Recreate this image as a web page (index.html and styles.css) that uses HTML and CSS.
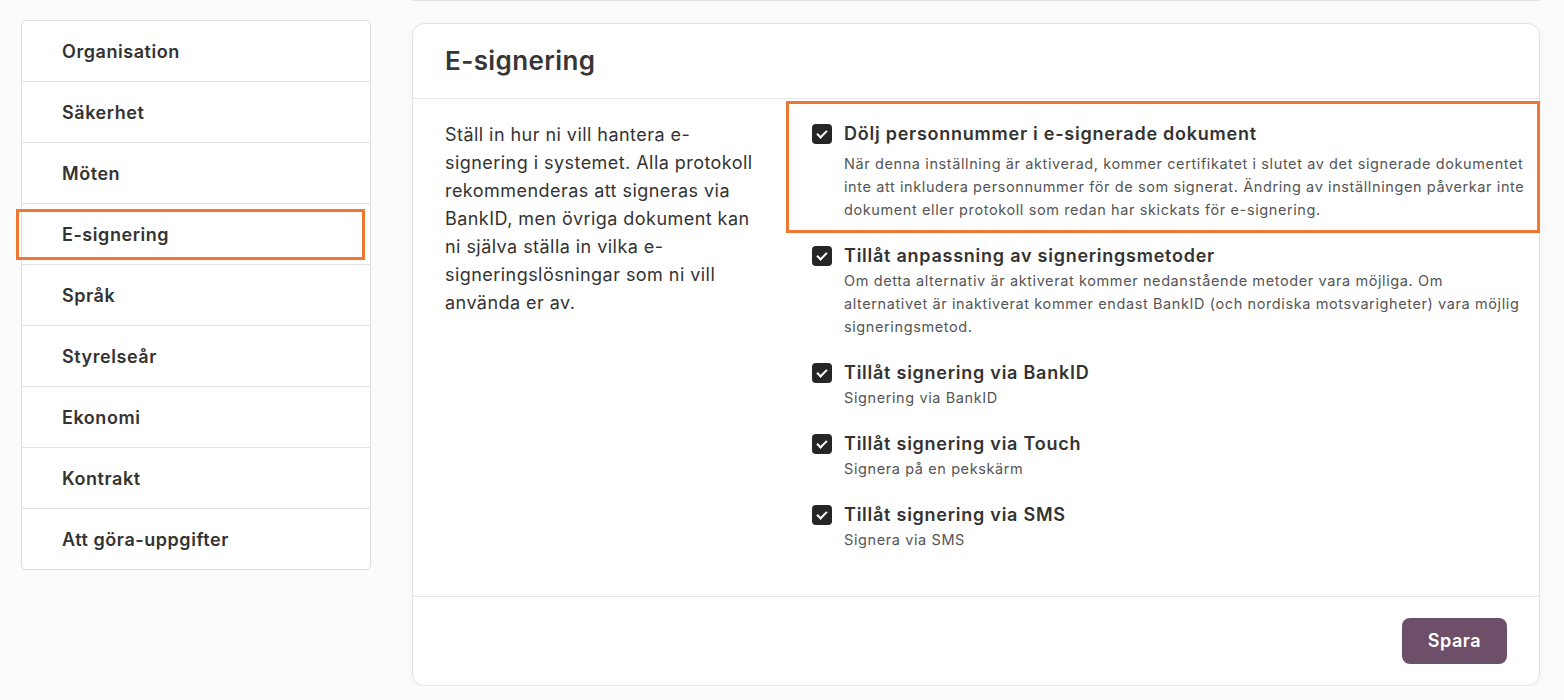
FILE: index.html
```html
<!DOCTYPE html>
<html lang="sv">
<head>
  <meta charset="utf-8" />
  <title>Inställningar – E-signering</title>
  <link rel="stylesheet" href="styles.css">
</head>
<body>
  <div class="page">

    <ul class="side-menu">
      <li>Organisation</li>
      <li>Säkerhet</li>
      <li>Möten</li>
      <li class="marked">E-signering</li>
      <li>Språk</li>
      <li>Styrelseår</li>
      <li>Ekonomi</li>
      <li>Kontrakt</li>
      <li>Att göra-uppgifter</li>
    </ul>

    <div class="content">
      <div class="prev-card"></div>

      <div class="card">
        <div class="card-header">E-signering</div>

        <div class="card-body">
          <p class="intro">Ställ in hur ni vill hantera e-signering i systemet. Alla protokoll rekommenderas att signeras via BankID, men övriga dokument kan ni själva ställa in vilka e-signeringslösningar som ni vill använda er av.</p>

          <div class="options">
            <div class="option marked first">
              <span class="check"></span>
              <div>
                <p class="option-title">Dölj personnummer i e-signerade dokument</p>
                <p class="option-desc">När denna inställning är aktiverad, kommer certifikatet i slutet av det signerade dokumentet inte att inkludera personnummer för de som signerat. Ändring av inställningen påverkar inte dokument eller protokoll som redan har skickats för e-signering.</p>
              </div>
            </div>

            <div class="option">
              <span class="check"></span>
              <div>
                <p class="option-title">Tillåt anpassning av signeringsmetoder</p>
                <p class="option-desc">Om detta alternativ är aktiverat kommer nedanstående metoder vara möjliga. Om alternativet är inaktiverat kommer endast BankID (och nordiska motsvarigheter) vara möjlig signeringsmetod.</p>
              </div>
            </div>

            <div class="option">
              <span class="check"></span>
              <div>
                <p class="option-title">Tillåt signering via BankID</p>
                <p class="option-desc">Signering via BankID</p>
              </div>
            </div>

            <div class="option">
              <span class="check"></span>
              <div>
                <p class="option-title">Tillåt signering via Touch</p>
                <p class="option-desc">Signera på en pekskärm</p>
              </div>
            </div>

            <div class="option">
              <span class="check"></span>
              <div>
                <p class="option-title">Tillåt signering via SMS</p>
                <p class="option-desc">Signera via SMS</p>
              </div>
            </div>
          </div>
        </div>

        <div class="card-footer">
          <a class="btn-save">Spara</a>
        </div>
      </div>
    </div>

  </div>
</body>
</html>
```

FILE: styles.css
```css
body {
  margin: 0;
  background: #FBFBFB;
  color: #333;
  font: normal 18px/28px Inter, "Noto Sans", sans-serif;
}

p {
  margin: 0;
}

.page {
  display: flex;
  align-items: flex-start;
  gap: 41px;
  padding: 0 24px 0 21px;
}

/* left menu */

.side-menu {
  width: 348px;
  margin: 20px 0 0;
  padding: 0;
  list-style: none;
  background: #FFF;
  border: solid 1px #DEDEDE;
  border-radius: 5px;
}

.side-menu li {
  position: relative;
  height: 60px;
  padding: 0 0 0 40px;
  border-top: solid 1px #E2E2E2;
  font-weight: 600;
  line-height: 62px;
  letter-spacing: 0.55px;
}

.side-menu li:first-child {
  border-top: none;
}

.side-menu li.marked::after {
  content: "";
  position: absolute;
  left: -6px;
  top: 5px;
  width: 343px;
  height: 45px;
  border: solid 3px #EE7733;
}

/* main column */

.content {
  flex: 1;
}

.prev-card {
  height: 0;
  border-bottom: solid 1px #E6E6E6;
  border-radius: 0 0 10px 10px;
  box-shadow: 0 1px 6px rgba(0, 0, 0, 0.05);
}

.card {
  margin: 22px 0 0;
  background: #FFF;
  border: solid 1px #E4E4E4;
  border-radius: 12px;
  box-shadow: 0 1px 8px rgba(0, 0, 0, 0.04);
}

.card-header {
  height: 74px;
  padding: 0 32px;
  display: flex;
  align-items: center;
  border-bottom: solid 1px #E6E6E6;
  font: 600 26px/30px Inter, "Noto Sans", sans-serif;
  letter-spacing: 0.4px;
  color: #363636;
}

.card-body {
  display: grid;
  grid-template-columns: 315px 1fr;
  gap: 52px;
  padding: 22px 10px 45px 32px;
}

.intro {
  color: #333;
  letter-spacing: 0.45px;
}

/* options */

.options {
  display: flex;
  flex-direction: column;
  gap: 22px;
}

.option {
  position: relative;
  display: flex;
  gap: 12px;
}

.option.marked::after {
  content: "";
  position: absolute;
  left: -26px;
  top: -20px;
  right: -11px;
  bottom: -12px;
  border: solid 3px #EE7733;
}

.check {
  flex: none;
  width: 20px;
  height: 20px;
  margin: 3px 0 0;
  border-radius: 4px;
  background: #262626;
  position: relative;
}

.check::after {
  content: "";
  position: absolute;
  left: 7px;
  top: 4px;
  width: 4px;
  height: 8px;
  border: solid #FFF;
  border-width: 0 2.5px 2.5px 0;
  transform: rotate(45deg);
}

.option-title {
  font-weight: 600;
  line-height: 26px;
  letter-spacing: 0.75px;
  color: #333;
}

.option-desc {
  font-size: 14.5px;
  line-height: 23px;
  letter-spacing: 0.6px;
  color: #555;
}

.option.first .option-desc {
  margin-top: 5px;
}

/* footer */

.card-footer {
  display: flex;
  justify-content: flex-end;
  padding: 21px 32px 21px;
  border-top: solid 1px #E6E6E6;
}

.btn-save {
  display: inline-block;
  width: 105px;
  height: 46px;
  background: #6E4F69;
  border-radius: 8px;
  color: #FFF;
  font: 600 18px/46px Inter, "Noto Sans", sans-serif;
  letter-spacing: 0.5px;
  text-align: center;
}
```
